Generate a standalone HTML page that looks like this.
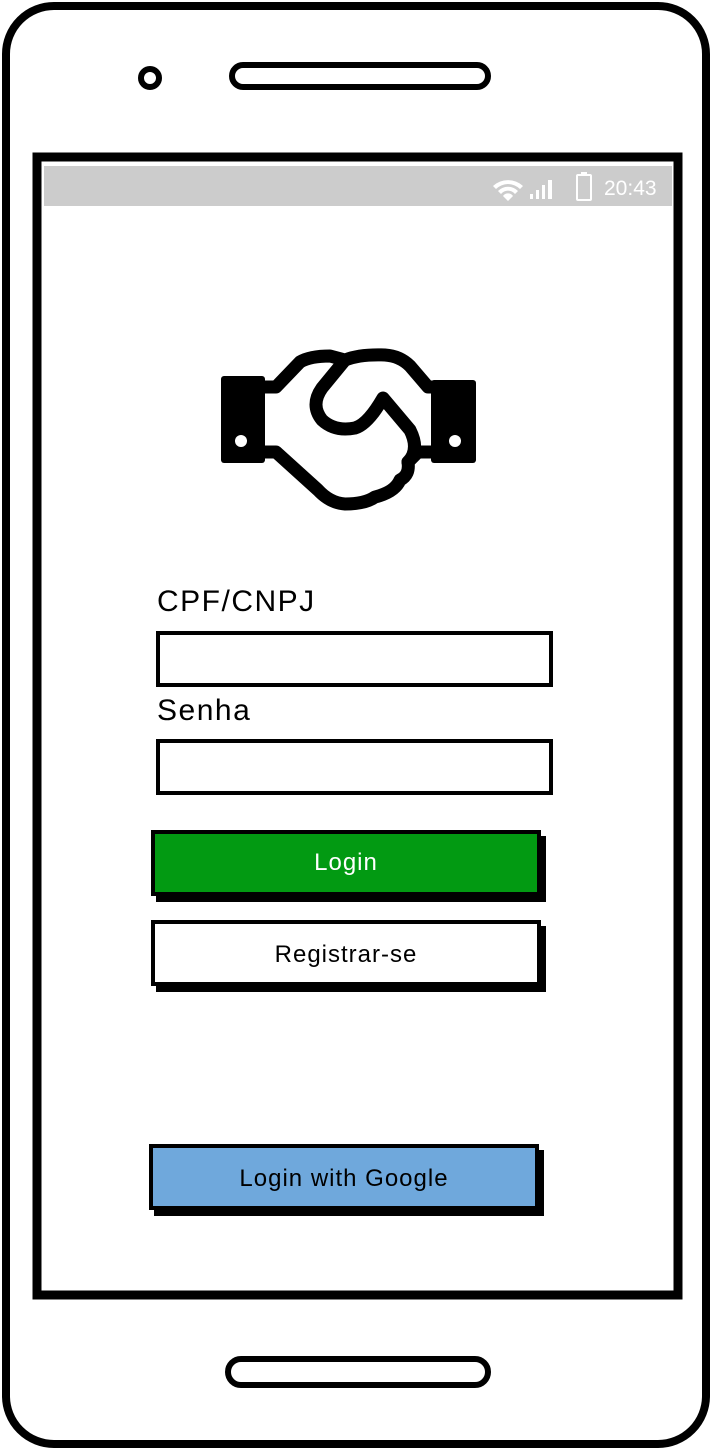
<!DOCTYPE html>
<html><head><meta charset="utf-8"><style>
html,body{margin:0;padding:0;background:#fff;width:712px;height:1450px;overflow:hidden;font-family:"Liberation Sans",sans-serif}
.lbl{position:absolute;left:157px;font-size:30px;letter-spacing:1.5px;color:#000}
.btn{position:absolute;box-sizing:border-box;border:4px solid #000;box-shadow:5px 6px 0 #000;text-align:center;font-size:24px;letter-spacing:1px}
</style></head><body>
<svg width="712" height="1450" style="position:absolute;left:0;top:0">
<rect x="6" y="6" width="700" height="1438" rx="48" fill="#fff" stroke="#000" stroke-width="8"/>
<rect x="44" y="166" width="628" height="40" fill="#cccccc"/>
<rect x="37" y="157" width="641" height="1138" fill="none" stroke="#000" stroke-width="9"/>
<circle cx="150" cy="78" r="9" fill="none" stroke="#000" stroke-width="6"/>
<rect x="232" y="65" width="256" height="22" rx="11" fill="none" stroke="#000" stroke-width="6"/>
<rect x="228" y="1359" width="260" height="26" rx="13" fill="none" stroke="#000" stroke-width="6"/>
<g fill="#fff">
<path d="M493 186 a22 22 0 0 1 30 0 l-3 3 a17 17 0 0 0 -24 0z M498 191 a14 14 0 0 1 20 0 l-3 3 a9 9 0 0 0 -14 0z M503 196 a6 6 0 0 1 10 0 l-5 5z"/>
<rect x="530" y="194" width="3" height="5"/><rect x="536" y="190" width="3" height="9"/><rect x="542" y="185" width="3" height="14"/><rect x="548" y="180" width="4" height="19"/>
<rect x="577" y="175" width="14" height="25" rx="1" fill="none" stroke="#fff" stroke-width="2"/><rect x="581" y="172" width="6" height="3"/>
</g>
<text x="604" y="195" font-family="Liberation Sans" font-size="21" fill="#fff">20:43</text>
<rect x="221" y="376" width="44" height="87" rx="3" fill="#000"/>
<rect x="431" y="380" width="45" height="83" rx="3" fill="#000"/>
<circle cx="241" cy="441" r="6" fill="#fff"/><circle cx="455" cy="441" r="6" fill="#fff"/>
<g fill="none" stroke="#000" stroke-width="13" stroke-linejoin="round" stroke-linecap="round">
<path d="M263 387 L276 387 L300 362 Q310 356 330 356 L345 360 Q360 354 385 355 Q400 356 410 366 L428 387 L434 387"/>
<path d="M345 360 L322 388 Q310 405 322 420 Q335 432 355 428 Q368 424 383 398 L410 430 Q420 450 408 462"/>
<path d="M263 452 L276 452 L318 490 Q330 503 345 504 Q365 504 375 497 Q395 492 400 480 Q410 475 408 462 L418 452 L434 452"/>
</g>
<rect x="158" y="633" width="393" height="52" fill="none" stroke="#000" stroke-width="4"/>
<rect x="158" y="741" width="393" height="52" fill="none" stroke="#000" stroke-width="4"/>
</svg>
<div class="lbl" style="top:585px">CPF/CNPJ</div>
<div class="lbl" style="top:694px">Senha</div>
<div class="btn" style="left:151px;top:830px;width:390px;height:66px;background:#029a12;color:#fff;line-height:58px">Login</div>
<div class="btn" style="left:151px;top:920px;width:390px;height:66px;background:#fff;color:#000;line-height:62px">Registrar-se</div>
<div class="btn" style="left:149px;top:1144px;width:390px;height:66px;background:#6fa8dc;color:#000;line-height:62px">Login with Google</div>
</body></html>
